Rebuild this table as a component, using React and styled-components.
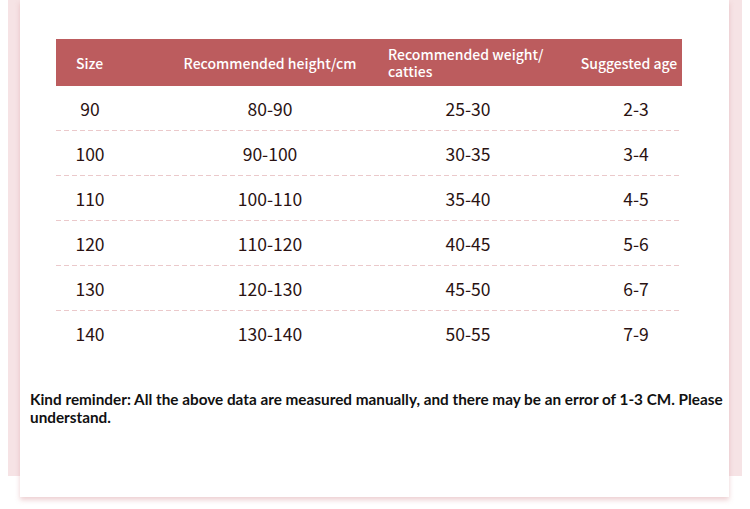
import React from 'react';
import styled, { createGlobalStyle } from 'styled-components';

const GlobalStyle = createGlobalStyle`
  *, *::before, *::after {
    box-sizing: border-box;
  }
  html, body {
    margin: 0;
    padding: 0;
    background: #ffffff;
  }
  body {
    font-family: 'Noto Sans CJK SC', 'Noto Sans', sans-serif;
  }
`;

const Page = styled.div`
  width: 750px;
  height: 509px;
  overflow: hidden;
  padding: 0 8px;
`;

const Band = styled.div`
  height: 476px;
  background: #f6e3e5;
  padding: 0 13px 0 12px;
`;

const Card = styled.div`
  height: 497px;
  background: #ffffff;
  box-shadow: 0 3px 5px rgba(214, 150, 156, 0.45);
  padding: 39px 46px 0 36px;
  display: flex;
  flex-direction: column;
`;

const Grid = styled.div`
  display: grid;
  grid-template-columns: 94px 230px 190px 112px;
`;

const HeadCell = styled.div`
  height: 47px;
  background: #bc5c5e;
  color: #ffffff;
  font-size: 14px;
  font-weight: 500;
  line-height: 16px;
  display: flex;
  align-items: center;
  justify-content: ${({ $align }) => ($align === 'left' ? 'flex-start' : 'center')};
  text-align: ${({ $align }) => $align || 'center'};
  padding: ${({ $pad }) => $pad};
  white-space: nowrap;
`;

const HeadLine = styled.span`
  display: block;
  height: 17px;
  line-height: 17px;
  overflow: visible;
`;

const BodyRow = styled.div`
  display: contents;
`;

const Cell = styled.div`
  height: 45px;
  padding-bottom: 1px;
  display: flex;
  align-items: center;
  justify-content: center;
  font-size: 17.5px;
  color: #2a1212;
  padding-left: ${({ $left }) => $left || 0}px;
  padding-right: ${({ $right }) => $right || 0}px;
  background-image: ${({ $last }) =>
    $last
      ? 'none'
      : 'repeating-linear-gradient(90deg, #ebc9cb 0 5px, transparent 5px 8px)'};
  background-size: 100% 1px;
  background-position: left bottom;
  background-repeat: no-repeat;
`;

const Reminder = styled.p`
  margin: 34px 0 0 -26px;
  width: 705px;
  font-family: Lato, 'Liberation Sans', sans-serif;
  font-weight: 700;
  font-size: 15.3px;
  line-height: 18px;
  color: #111111;
`;

const columns = [
  { head: 'Size', align: 'left', headPad: '0 0 0 20px', right: 26 },
  { head: 'Recommended height/cm', headPad: '0 0 0 10px', left: 10 },
  { head: ['Recommended weight/', 'catties'], align: 'left', headPad: '0 0 0 8px', right: 14 },
  { head: 'Suggested age', headPad: '0 0 0 6px', left: 20 },
];

const rows = [
  ['90', '80-90', '25-30', '2-3'],
  ['100', '90-100', '30-35', '3-4'],
  ['110', '100-110', '35-40', '4-5'],
  ['120', '110-120', '40-45', '5-6'],
  ['130', '120-130', '45-50', '6-7'],
  ['140', '130-140', '50-55', '7-9'],
];

const App = () => (
  <>
    <GlobalStyle />
    <Page>
      <Band>
        <Card>
          <Grid>
            {columns.map((col, i) => (
              <HeadCell key={i} $align={col.align} $pad={col.headPad}>
                {Array.isArray(col.head) ? (
                  <div>
                    {col.head.map((line) => (
                      <HeadLine key={line}>{line}</HeadLine>
                    ))}
                  </div>
                ) : (
                  col.head
                )}
              </HeadCell>
            ))}
            {rows.map((row, r) => (
              <BodyRow key={r}>
                {row.map((value, c) => (
                  <Cell
                    key={c}
                    $left={columns[c].left}
                    $right={columns[c].right}
                    $last={r === rows.length - 1}
                  >
                    {value}
                  </Cell>
                ))}
              </BodyRow>
            ))}
          </Grid>
          <Reminder>
            Kind reminder: All the above data are measured manually, and there may be an error of 1-3 CM. Please understand.
          </Reminder>
        </Card>
      </Band>
    </Page>
  </>
);

export default App;
